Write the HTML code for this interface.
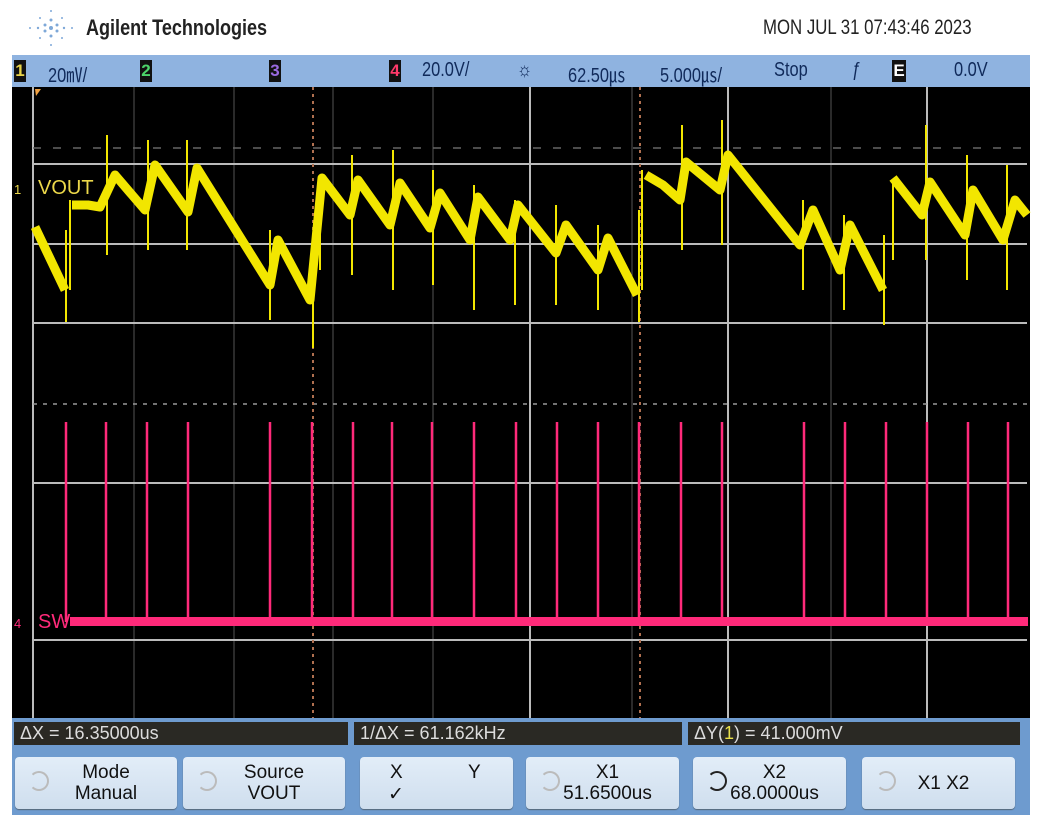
<!DOCTYPE html>
<html><head><meta charset="utf-8"><style>
body{margin:0;width:1042px;height:829px;background:#fff;position:relative;overflow:hidden;font-family:"Liberation Sans",sans-serif}
.a{position:absolute}
.bar{left:12px;top:55px;width:1018px;height:32px;background:#8fb3e0}
.bt{top:4px;font-size:20px;color:#102a5a;transform:scaleX(.82);transform-origin:left}
.ch{top:5px;width:12px;height:22px;background:#111;font-size:17px;font-weight:bold;text-align:center;line-height:22px}
.ro{top:722px;height:23px;background:#2a2924;color:#ddd;font-size:18px;line-height:23px;padding-left:6px;box-sizing:border-box}
.btn{top:757px;height:52px;background:linear-gradient(#e2edf8,#cfdeee);border-radius:4px;color:#111;font-size:19px;text-align:center;line-height:21px;box-shadow:0 1px 1px #567}
.ic{position:absolute;left:14px;top:14px;width:16px;height:16px;border:2px solid #bbb;border-radius:50%;border-left-color:transparent}
</style></head><body>
<svg class="a" style="left:26px;top:8px" width="50" height="40"><g fill="#7ea8d8"><circle cx="25" cy="20" r="2"/><circle cx="19" cy="17" r="1.5"/><circle cx="31" cy="17" r="1.5"/><circle cx="19" cy="23" r="1.5"/><circle cx="31" cy="23" r="1.5"/><circle cx="25" cy="12" r="1.5"/><circle cx="25" cy="28" r="1.5"/><circle cx="12" cy="20" r="1.2"/><circle cx="38" cy="20" r="1.2"/><circle cx="14" cy="10" r="1"/><circle cx="36" cy="10" r="1"/><circle cx="14" cy="30" r="1"/><circle cx="36" cy="30" r="1"/><circle cx="25" cy="3" r="1"/><circle cx="25" cy="37" r="1"/><circle cx="4" cy="20" r="1"/><circle cx="46" cy="20" r="1"/></g></svg>
<div class="a" style="left:86px;top:15px;font-size:22px;font-weight:bold;color:#222;transform:scaleX(.82);transform-origin:left">Agilent Technologies</div>
<div class="a" style="left:763px;top:16px;font-size:21px;color:#222;transform:scaleX(.8);transform-origin:left">MON JUL 31 07:43:46 2023</div>
<div class="a bar">
<div class="a ch" style="left:2px;color:#e8d44a">1</div>
<div class="a bt" style="left:36px">20㎷/</div>
<div class="a ch" style="left:128px;color:#4cd46a">2</div>
<div class="a ch" style="left:257px;color:#9a6ae0">3</div>
<div class="a ch" style="left:377px;color:#ff3a6a">4</div>
<div class="a bt" style="left:410px">20.0V/</div>
<div class="a bt" style="left:505px;font-size:20px">☼</div>
<div class="a bt" style="left:556px">62.50㎲</div>
<div class="a bt" style="left:648px">5.000㎲/</div>
<div class="a bt" style="left:762px">Stop</div>
<div class="a bt" style="left:840px">ƒ</div>
<div class="a ch" style="left:880px;color:#fff;width:14px">E</div>
<div class="a bt" style="left:942px">0.0V</div>
</div>
<svg class="a" style="left:0;top:0" width="1042" height="829">
<rect x="12" y="87" width="1018" height="631" fill="#000"/>
<rect x="12" y="718" width="1018" height="97" fill="#6e9bcf"/>
<g stroke="#555" stroke-width="1">
<line x1="134" y1="87" x2="134" y2="718"/><line x1="234" y1="87" x2="234" y2="718"/><line x1="333" y1="87" x2="333" y2="718"/><line x1="433" y1="87" x2="433" y2="718"/><line x1="632" y1="87" x2="632" y2="718"/><line x1="831" y1="87" x2="831" y2="718"/>
</g>
<g stroke="#bbb" stroke-width="2">
<line x1="33" y1="87" x2="33" y2="718"/><line x1="530" y1="87" x2="530" y2="718"/><line x1="728" y1="87" x2="728" y2="718"/><line x1="927" y1="87" x2="927" y2="718"/>
<line x1="33" y1="164" x2="1027" y2="164"/><line x1="33" y1="244" x2="1027" y2="244"/><line x1="33" y1="323" x2="1027" y2="323"/><line x1="33" y1="483" x2="1027" y2="483"/><line x1="33" y1="640" x2="1027" y2="640"/>
</g>
<line x1="33" y1="404" x2="1027" y2="404" stroke="#999" stroke-width="1.5" stroke-dasharray="4 6"/>
<line x1="33" y1="148" x2="1027" y2="148" stroke="#666" stroke-width="1.5" stroke-dasharray="8 12"/>
<line x1="313" y1="87" x2="313" y2="718" stroke="#b07050" stroke-width="2" stroke-dasharray="3 4"/>
<line x1="640" y1="87" x2="640" y2="718" stroke="#b07050" stroke-width="2" stroke-dasharray="3 4"/>
<path d="M35 89 L41 89 L36 96Z" fill="#f0a040"/>
<g stroke="#ff2a7a" stroke-width="2.5">
<path d="M66 422V622M106 422V622M147 422V622M188 422V622M270 422V622M312 422V622M353 422V622M392 422V622M432 422V622M474 422V622M516 422V622M557 422V622M598 422V622M639 422V622M681 422V622M722 422V622M804 422V622M845 422V622M886 422V622M927 422V622M968 422V622M1008 422V622"/>
</g>
<rect x="70" y="617" width="958" height="9" fill="#ff2a7a"/>
<text x="38" y="628" font-size="20" fill="#ff2a7a" font-family="Liberation Sans">SW</text>
<text x="14" y="628" font-size="13" fill="#ff2a7a" font-family="Liberation Sans">4</text>
<text x="14" y="194" font-size="13" fill="#ecd84a" font-family="Liberation Sans">1</text>
<text x="38" y="194" font-size="20" fill="#ecd84a" font-family="Liberation Sans">VOUT</text>
<g fill="none" stroke="#f2e600" stroke-width="9" stroke-linejoin="round">
<path d="M35 227L65 290M72 205L88 205L100 207L115 175L145 210L155 165L188 212L197 168L270 285L278 240L310 300L322 178L350 215L358 180L390 225L400 183L430 228L440 193L470 240L478 197L510 240L518 205L556 253L566 225L598 270L608 238L637 295"/>
<path d="M646 175L663 185L680 200L686 162L720 190L728 155L800 245L813 210L840 270L850 225L883 290M893 178L922 215L930 182L965 235L973 190L1003 240L1015 200L1027 215"/>
</g>
<g stroke="#f2e600" stroke-width="2">
<path d="M66 230V322M70 200V290M107 135V255M148 140V250M187 140V250M270 230V320M313 260V348M320 180V270M352 155V275M393 150V290M433 170V285M474 185V310M515 200V305M556 205V305M598 225V310M639 210V322M642 170V290M682 125V250M722 120V245M803 200V290M844 215V310M884 235V325M893 180V260M926 125V260M967 155V280M1007 165V290"/>
</g>
</svg>
<div class="a ro" style="left:14px;width:334px">ΔX = 16.35000us</div>
<div class="a ro" style="left:354px;width:328px">1/ΔX = 61.162kHz</div>
<div class="a ro" style="left:688px;width:332px">ΔY(<span style="color:#e8e04a">1</span>) = 41.000mV</div>
<div class="a btn" style="left:15px;width:162px"><div class="ic"></div><div style="padding-top:5px;padding-left:20px">Mode<br>Manual</div></div>
<div class="a btn" style="left:183px;width:162px"><div class="ic"></div><div style="padding-top:5px;padding-left:20px">Source<br>VOUT</div></div>
<div class="a btn" style="left:360px;width:153px"><div class="a" style="left:30px;top:5px">X</div><div class="a" style="left:108px;top:5px">Y</div><div class="a" style="left:28px;top:27px">✓</div></div>
<div class="a btn" style="left:526px;width:153px"><div class="ic"></div><div style="padding-top:5px;padding-left:10px">X1<br>51.6500us</div></div>
<div class="a btn" style="left:693px;width:153px"><div class="ic" style="border-color:#222;border-left-color:transparent"></div><div style="padding-top:5px;padding-left:10px">X2<br>68.0000us</div></div>
<div class="a btn" style="left:862px;width:153px"><div class="ic"></div><div style="padding-top:16px;padding-left:10px">X1 X2</div></div>
</body></html>
